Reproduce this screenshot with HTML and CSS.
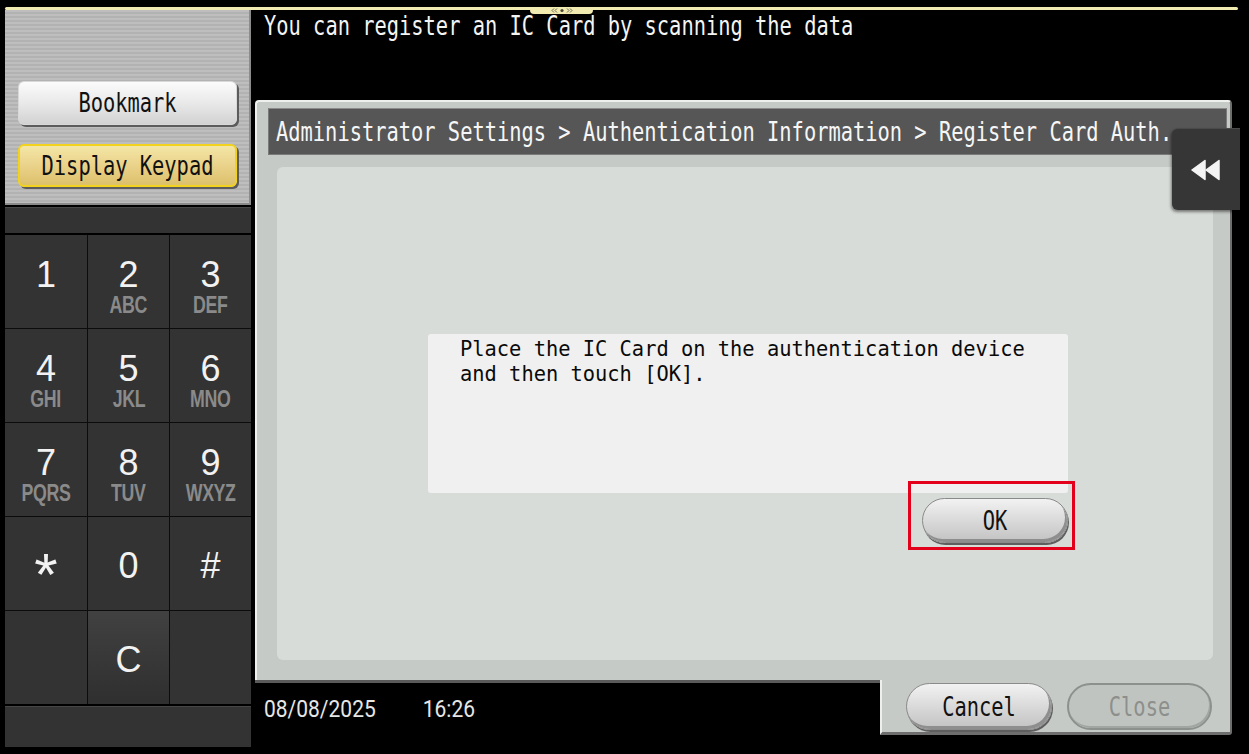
FILE: index.html
```html
<!DOCTYPE html>
<html lang="en">
<head>
<meta charset="utf-8">
<title>Register Card Auth.</title>
<link rel="stylesheet" href="styles.css">
</head>
<body>
<div class="screen">
  <div class="topline">
    <div class="topline-tab">
      <svg width="22" height="5" viewBox="0 0 22 5" aria-hidden="true">
        <path d="M3 0.5 L1 2.5 L3 4.5 M6 0.5 L4 2.5 L6 4.5 M16 0.5 L18 2.5 L16 4.5 M19 0.5 L21 2.5 L19 4.5" fill="none" stroke="#5a5a4a" stroke-width="0.9"/>
        <circle cx="11" cy="2.5" r="1.6" fill="#4a4a3a"/>
      </svg>
    </div>
  </div>
  <div class="main">
    <aside class="side">
      <div class="side-top">
        <div class="sbtn sbtn-light"><span class="tx">Bookmark</span></div>
        <div class="sbtn sbtn-yellow"><span class="tx">Display Keypad</span></div>
      </div>
      <div class="side-bar"></div>
      <div class="keypad">
        <div class="key"><span class="digit">1</span><span class="letters">&nbsp;</span></div>
        <div class="key"><span class="digit">2</span><span class="letters">ABC</span></div>
        <div class="key"><span class="digit">3</span><span class="letters">DEF</span></div>
        <div class="key"><span class="digit">4</span><span class="letters">GHI</span></div>
        <div class="key"><span class="digit">5</span><span class="letters">JKL</span></div>
        <div class="key"><span class="digit">6</span><span class="letters">MNO</span></div>
        <div class="key"><span class="digit">7</span><span class="letters">PQRS</span></div>
        <div class="key"><span class="digit">8</span><span class="letters">TUV</span></div>
        <div class="key"><span class="digit">9</span><span class="letters">WXYZ</span></div>
        <div class="key key-single"><span class="digit star">*</span></div>
        <div class="key key-single"><span class="digit">0</span></div>
        <div class="key key-single"><span class="digit">#</span></div>
        <div class="key key-blank"></div>
        <div class="key key-single key-c"><span class="digit">C</span></div>
        <div class="key key-blank"></div>
      </div>
      <div class="side-bottom"></div>
    </aside>
    <section class="content">
      <div class="instruction"><span class="tx">You can register an IC Card by scanning the data</span></div>
      <div class="dialog">
        <div class="panel">
          <div class="crumb"><span class="tx">Administrator Settings &gt; Authentication Information &gt; Register Card Auth.</span></div>
          <div class="panel-body">
            <div class="msg-group">
              <div class="msg-box">
                <p class="msg">Place the IC Card on the authentication device<br>and then touch [OK].</p>
              </div>
              <div class="ok-row">
                <div class="ok-wrap">
                  <div class="pill pill-ok"><span class="tx">OK</span></div>
                  <div class="highlight"></div>
                </div>
              </div>
            </div>
          </div>
        </div>
        <div class="tab-back">
          <svg width="30" height="22" viewBox="0 0 30 22" aria-hidden="true">
            <path d="M1 11 L14 1.5 L14 20.5 Z" fill="#f4f4f4" stroke="#f4f4f4" stroke-width="1.5" stroke-linejoin="round"/>
            <path d="M15 11 L28 1.5 L28 20.5 Z" fill="#f4f4f4" stroke="#f4f4f4" stroke-width="1.5" stroke-linejoin="round"/>
          </svg>
        </div>
        <div class="footer">
          <div class="datetime">
            <span class="dt date">08/08/2025</span>
            <span class="dt time">16:26</span>
          </div>
          <div class="btnbar">
            <div class="pill pill-cancel"><span class="tx">Cancel</span></div>
            <div class="pill pill-disabled"><span class="tx">Close</span></div>
          </div>
        </div>
      </div>
    </section>
  </div>
</div>
</body>
</html>
```

FILE: styles.css
```css
* { box-sizing: border-box; }

html, body {
  margin: 0;
  padding: 0;
  background: #000;
}

body {
  width: 1249px;
  height: 754px;
  overflow: hidden;
  font-family: "DejaVu Sans Mono", "Liberation Mono", monospace;
}

.tx {
  display: inline-block;
  transform: scaleY(1.3);
  white-space: pre;
}

.screen {
  width: 1249px;
  height: 754px;
  padding: 7px 11px 0 5px;
  display: flex;
  flex-direction: column;
}

/* top yellow line */
.topline {
  height: 3px;
  background: #f1ebb2;
  border-radius: 2px;
  position: relative;
}

.topline-tab {
  position: absolute;
  left: 525px;
  top: 0;
  width: 63px;
  height: 7px;
  background: #f1ebb2;
  border-radius: 0 0 4px 4px;
  display: flex;
  align-items: center;
  justify-content: center;
}

.main {
  flex: 1;
  display: flex;
  min-height: 0;
}

/* ---------- left side ---------- */
.side {
  width: 246px;
  display: flex;
  flex-direction: column;
  gap: 2px;
}

.side-top {
  height: 195px;
  background: repeating-linear-gradient(to bottom, #bebebe 0 2px, #b2b2b2 2px 4px);
  border-right: 2px solid #8c8c8c;
  border-bottom: 2px solid #8a8a8a;
  padding: 71px 12px 0 13px;
  display: flex;
  flex-direction: column;
  gap: 19px;
}

.sbtn {
  display: flex;
  align-items: center;
  justify-content: center;
  border-radius: 6px;
  font-size: 20.4px;
  color: #111;
  box-shadow: 2px 2px 0 #5c5c5c;
}

.sbtn-light {
  height: 44px;
  background: linear-gradient(#fbfbfb, #e9e9e9 50%, #d2d2d2);
  border: 1px solid #d8d8d8;
}

.sbtn-yellow {
  height: 43px;
  background: linear-gradient(#f4e6a6, #ead28a 50%, #dcc06a);
  border: 2px solid #f3d21e;
}

.side-bar {
  height: 26px;
  background: #333;
  border-top: 1px solid #474747;
}

.keypad {
  height: 469px;
  display: grid;
  grid-template-columns: 82px 81px 81px;
  grid-template-rows: repeat(5, 93px);
  gap: 1px;
  background: #0c0c0c;
}

.key {
  background: #333;
  display: flex;
  flex-direction: column;
  align-items: center;
  padding-top: 25px;
  font-family: "Liberation Sans", Arial, sans-serif;
}

.key-single {
  justify-content: center;
  padding-top: 4px;
}

.key-c {
  background: linear-gradient(#414141, #2f2f2f);
}

.digit {
  font-size: 36px;
  line-height: 30px;
  height: 30px;
  color: #f2f2f2;
}

.star {
  font-size: 60px;
  line-height: 30px;
  transform: translateY(9px);
}

.letters {
  margin-top: 4px;
  font-size: 24px;
  line-height: 22px;
  font-weight: bold;
  color: #8a8a8a;
  transform: scaleX(0.74);
  letter-spacing: -0.5px;
}

.side-bottom {
  height: 41px;
  background: #333;
  border-top: 1px solid #464646;
}

/* ---------- right content ---------- */
.content {
  flex: 1;
  display: flex;
  flex-direction: column;
}

.instruction {
  height: 90px;
  padding: 5px 0 0 13px;
  color: #f4f4f4;
  font-size: 20.4px;
  line-height: 22px;
}

.dialog {
  position: relative;
  margin-left: 4px;
  width: 977px;
}

.panel {
  height: 580px;
  background: #c6cac6;
  border-top: 2px solid #eef0ee;
  border-left: 2px solid #eef0ee;
  border-right: 2px solid #6e6e6e;
  border-radius: 4px 4px 0 0;
  padding: 6px 3px 0 11px;
}

.crumb {
  height: 47px;
  background: #565656;
  border: 1px solid #7a7a7a;
  border-top-color: #8a8a8a;
  padding-left: 7px;
  display: flex;
  align-items: center;
  color: #f6f6f6;
  font-size: 20.4px;
  overflow: hidden;
}

.panel-body {
  height: 493px;
  margin: 12px 14px 0 9px;
  background: #d8dcd8;
  border-radius: 6px;
  padding: 167px 0 0 151px;
}

.msg-group {
  width: 640px;
}

.msg-box {
  height: 159px;
  background: #f0f0f0;
  border-radius: 3px;
  padding: 2px 0 0 32px;
}

.msg {
  margin: 0;
  font-size: 20.4px;
  line-height: 24px;
  color: #0a0a0a;
  transform: scaleY(1.04);
  transform-origin: top left;
  white-space: pre;
}

.ok-row {
  display: flex;
  justify-content: flex-end;
  margin-top: 5px;
}

.ok-wrap {
  position: relative;
}

.highlight {
  position: absolute;
  left: -14px;
  top: -17px;
  right: -7px;
  bottom: -7px;
  border: 3px solid #e3001b;
}

.pill {
  display: flex;
  align-items: center;
  justify-content: center;
  border-radius: 24px;
  font-size: 20.4px;
  color: #111;
  background: linear-gradient(#f2f2f2, #dcdcdc 45%, #c2c2c2);
  border: 1px solid #8a8a8a;
  box-shadow: inset -2px -3px 0 #8e8e8e, 1px 2px 0 #5e5e5e;
}

.pill-ok {
  width: 146px;
  height: 45px;
}

.tab-back {
  position: absolute;
  left: 917px;
  top: 28px;
  width: 68px;
  height: 82px;
  background: #363636;
  border-top: 1px solid #4a4a4a;
  border-radius: 6px 0 0 6px;
  box-shadow: -1px 2px 3px rgba(0, 0, 0, 0.45);
  display: flex;
  align-items: center;
  justify-content: center;
}

.footer {
  height: 55px;
  display: flex;
}

.datetime {
  flex: 1;
  background: #000;
  border-top: 3px solid #5a5a5a;
  padding: 16px 0 0 9px;
  display: flex;
  gap: 47px;
  align-items: flex-start;
}

.dt {
  display: inline-block;
  font-family: Roboto, "Liberation Sans", sans-serif;
  font-size: 21px;
  line-height: 20px;
  color: #e6e6e6;
  transform: scaleY(1.15);
}

.btnbar {
  width: 352px;
  background: #c6cac6;
  border-left: 2px solid #eef0ee;
  border-right: 2px solid #6e6e6e;
  border-bottom: 3px solid #6e6e6e;
  border-radius: 0 0 3px 0;
  padding: 3px 0 0 24px;
  display: flex;
  gap: 15px;
  align-items: flex-start;
}

.pill-cancel {
  width: 146px;
  height: 47px;
}

.pill-disabled {
  width: 145px;
  height: 47px;
  color: #8c8f8c;
  background: #c0c4c0;
  border: 2px solid #8d918d;
  box-shadow: inset -1px -2px 0 #a2a6a2;
}
```
